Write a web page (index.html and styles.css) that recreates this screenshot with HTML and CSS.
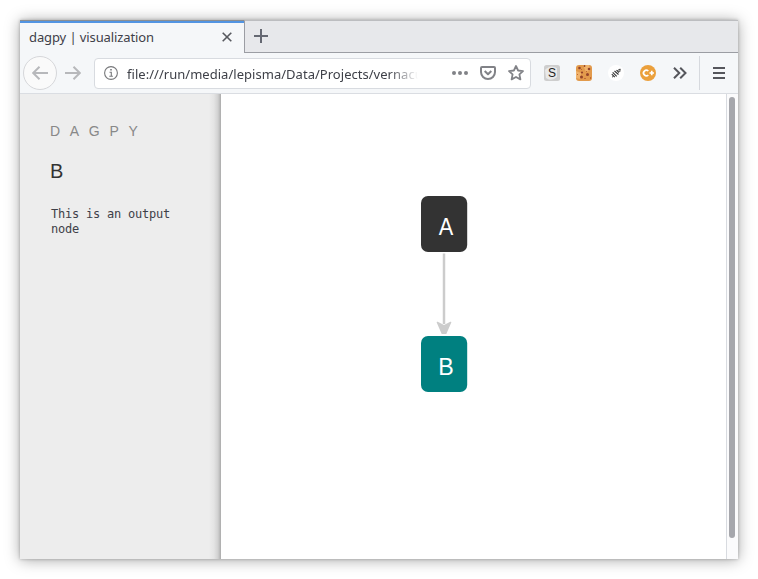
FILE: index.html
```html
<!DOCTYPE html>
<html lang="en">
<head>
<meta charset="utf-8">
<title>dagpy | visualization</title>
<link rel="stylesheet" href="styles.css">
</head>
<body>
<div class="window">
  <div class="tabs">
    <div class="tab"><span class="title">dagpy | visualization</span>
      <svg class="close" width="10" height="10" viewBox="0 0 10 10"><path d="M.7.7l8.6 8.6M9.3.7L.7 9.3"/></svg>
    </div>
    <div class="strip"><svg width="14" height="14" viewBox="0 0 14 14"><path d="M7 0v14M0 7h14"/></svg></div>
  </div>
  <div class="toolbar">
    <div class="back"><svg width="16" height="14" viewBox="0 0 16 14"><path d="M16 7H1.5M7.5 .8L1.2 7l6.3 6.2"/></svg></div>
    <svg class="forward" width="16" height="14" viewBox="0 0 16 14"><path d="M0 7h14.5M8.500 .8L14.800 7l-6.300 6.200"/></svg>
    <div class="address">
      <svg class="info" width="14" height="14" viewBox="0 0 14 14"><circle cx="7" cy="7" r="6.4"/><path d="M5.500 6.200H7.300v4M5.300 10.200h3.600"/><path class="dot" d="M6.200 3h1.600v1.600H6.200z"/></svg>
      <span class="url">file:///run/media/lepisma/Data/Projects/vernacular</span>
      <svg class="dots" width="16" height="4" viewBox="0 0 16 4"><circle cx="2" cy="2" r="2"/><circle cx="8" cy="2" r="2"/><circle cx="14" cy="2" r="2"/></svg>
      <svg class="line" width="16" height="14" viewBox="0 0 16 14"><path d="M2 1h12q1 0 1 1v4a7 7 0 0 1-14 0V2q0-1 1-1z"/><path d="M4.700 5L8 8.300 11.300 5"/></svg>
      <svg class="line star" width="16" height="16" viewBox="0 0 16 16"><path d="M8 1l2.100 4.500 4.900.6-3.600 3.300 1 5L8 12l-4.400 2.400 1-5L1 6.100l4.900-.6z"/></svg>
    </div>
    <div class="extensions">
      <svg width="16" height="16" viewBox="0 0 16 16"><rect width="16" height="16" rx="2.500" fill="#cecece"/><path d="M1 5Q6-1 13 3v9q-6 5-11 1z" fill="#e9e9e9"/><text x="8" y="12.200" class="s">S</text></svg>
      <svg width="16" height="16" viewBox="0 0 16 16"><rect width="16" height="16" rx="3" fill="#e29a4c"/><path d="M7 0h6l1 5-4 2zM0 6l5 2-1 6-4-1z" fill="#f0b36c"/><g fill="#944329"><circle cx="3.500" cy="3" r="1.300"/><circle cx="13" cy="4" r="1.300"/><circle cx="6" cy="7.500" r="1.100"/><circle cx="11.500" cy="9.500" r="1.500"/><circle cx="5.500" cy="12" r="1.500"/><circle cx="8.500" cy="1" r=".9"/></g><path d="M5 4h1v1H5zM10 6h1v1h-1zM8 13h2v1H8zM1 9h1v1H1zM14 12h1v2h-1z" fill="#bf6835"/></svg>
      <svg width="16" height="16" viewBox="0 0 16 16"><circle cx="8" cy="8" r="8" fill="#fff"/><g fill="none" stroke="#333" stroke-width="1.100"><path d="M3.800 9.200l3 3M4.700 7.300l4 4M6.500 6l4 3.500M8.500 5.200l2.500 2.300"/><path d="M4 12.200l1.500-1M9.500 5.500l2.700-1.500-.5 3" stroke-width=".9"/></g></svg>
      <svg width="16" height="16" viewBox="0 0 16 16"><circle cx="8" cy="8" r="8" fill="#eba03c"/><path d="M8.300 6A2.800 2.800 0 1 0 8.300 10M9.500 8h4.500M11.750 5.800v4.400" fill="none" stroke="#fff" stroke-width="1.700"/></svg>
      <svg class="dark" width="14" height="12" viewBox="0 0 14 12"><path d="M1 .7L6.300 6 1 11.300M7.200 .7L12.500 6l-5.300 5.300"/></svg>
    </div>
    <div class="menu"><svg class="dark" width="12" height="12" viewBox="0 0 12 12"><path d="M0 1h12M0 6h12M0 11h12"/></svg></div>
  </div>
  <div class="content">
    <aside>
      <div class="brand">DAGPY</div>
      <h1>B</h1>
      <pre>This is an output
node</pre>
    </aside>
    <main>
      <svg width="505" height="465" viewBox="0 0 505 465">
        <path d="M223 159.500V230" stroke="#ccc" stroke-width="2.500"/>
        <path d="M215.700 228.500q-.2-1.200 1-.7l6.300 3.200 6.300-3.200q1.200-.5 1 .7l-5 11.500h-4.600z" fill="#ccc"/>
        <rect x="200" y="102" width="46.200" height="56" rx="7" fill="#333"/>
        <rect x="200" y="242" width="46.200" height="56" rx="7" fill="#008080"/>
        <text class="node" x="225" y="141" textLength="14.500" lengthAdjust="spacingAndGlyphs">A</text>
        <text class="node" x="225" y="281" textLength="15.500" lengthAdjust="spacingAndGlyphs">B</text>
      </svg>
    </main>
    <div class="scroll"><div class="thumb"></div></div>
  </div>
</div>
</body>
</html>
```
FILE: styles.css
```css
* { box-sizing: border-box; }
body { margin: 0; padding: 20px; height: 579px; background: #fff; overflow: hidden; }
svg { display: block; flex: none; }
.window { width: 718px; height: 539px; display: flex; flex-direction: column; background: #f5f7f9; box-shadow: 0 0 3px rgba(0,0,0,.25), 0 1px 14px rgba(0,0,0,.35); font: 13px "Noto Sans", sans-serif; color: #3e4048; }
.tabs { height: 33px; display: flex; flex: none; }
.tab { width: 225px; padding: 0 13px 0 9px; display: flex; align-items: center; justify-content: space-between; border-top: 1px solid #8b8e91; box-shadow: inset 0 2px #5294e2; }
.title { letter-spacing: -.1px; }
.close { stroke: #57595f; stroke-width: 1.6; }
.strip { flex: 1; margin-left: -1px; padding: 8px 9px; background: #e7e8eb; border-left: 1px solid #9b9da3; border-bottom: 1px solid #9b9da3; border-top: 1px solid #bcbdc0; }
.strip svg { stroke: #656872; stroke-width: 2; }
.toolbar { height: 41px; display: flex; align-items: center; flex: none; border-bottom: 1px solid #dadde2; }
.back { width: 34px; height: 34px; margin-left: 3px; border: 1px solid #d6d7da; border-radius: 50%; background: #fafafa; display: flex; align-items: center; justify-content: center; }
.back svg, .forward { fill: none; stroke: #b7b8bb; stroke-width: 2; }
.forward { margin-left: 8px; }
.address { width: 437px; height: 31px; margin: 0 0 0 13px; padding: 0 6px 0 9px; display: flex; align-items: center; background: #fff; border: 1px solid #d8dbe0; border-radius: 4px; }
.info { fill: none; stroke: #77787b; stroke-width: 1.1; }
.info .dot { fill: #77787b; stroke: none; }
.url { width: 291px; margin: 1px 34px 0 9px; overflow: hidden; white-space: nowrap; letter-spacing: .03px; mask-image: linear-gradient(90deg, #000 262px, transparent 291px); }
.dots { fill: #818287; }
.line { fill: none; stroke: #818287; stroke-width: 2; stroke-linejoin: round; margin-left: 12px; }
.star { stroke-width: 1.8; }
.extensions { display: flex; align-items: center; gap: 16px; margin-left: 13px; }
.s { font: 12px "Liberation Sans", sans-serif; text-anchor: middle; fill: #222; }
.extensions .dark { margin-left: 1px; }
.dark { fill: none; stroke: #55565c; stroke-width: 2; }
.menu { height: 34px; border-left: 1px solid #d6d9de; margin-left: 12px; padding-left: 13px; display: flex; align-items: center; }
.content { flex: 1; display: flex; min-height: 0; }
aside { width: 201px; padding: 29px 15px 0 30px; background: linear-gradient(90deg, transparent 189px, rgba(0,0,0,.04) 194px, rgba(0,0,0,.12) 198px, rgba(0,0,0,.28) 201px), #ededed; }
.brand { font: 14px/16px "Liberation Sans", sans-serif; letter-spacing: 9.7px; color: #888; }
h1 { margin: 19px 0 0; font: 20px/26px "Liberation Sans", sans-serif; color: #333; }
pre { margin: 23px 0 0 1px; font: 12px/15px "DejaVu Sans Mono", monospace; letter-spacing: -.22px; color: #3e4048; }
main { width: 505px; background: #fff; }
.node { font: 24px "Liberation Sans", sans-serif; text-anchor: middle; fill: #fff; }
.scroll { width: 12px; padding: 3px 0 0 2px; background: #fbfbfc; border-left: 1px solid #d8dbe0; }
.thumb { width: 6px; height: 441px; border-radius: 3px; background: #a6a7ac; }
```
